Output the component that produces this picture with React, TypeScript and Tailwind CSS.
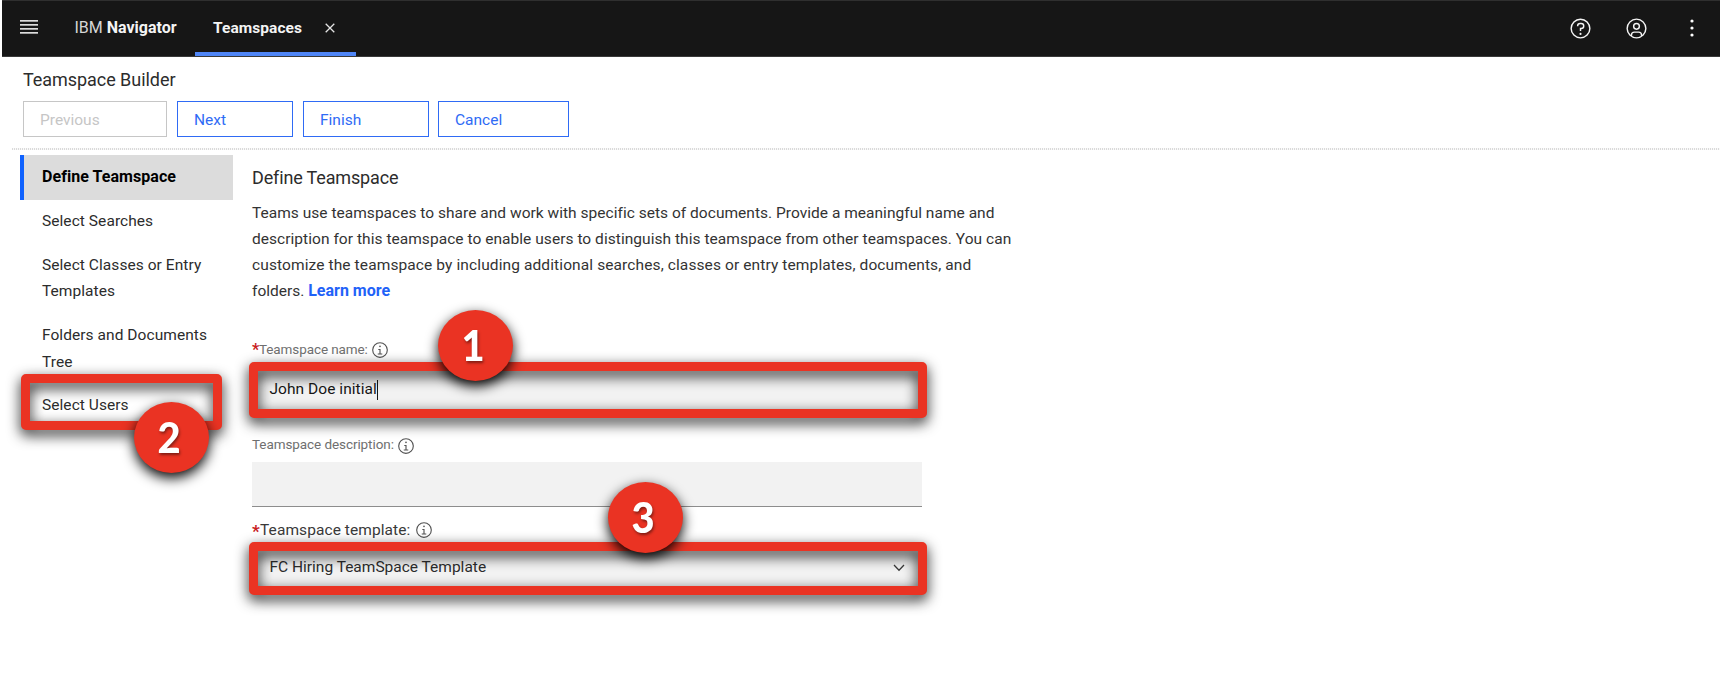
import React from "react";

const steps = [
  { lines: ["Define Teamspace"], active: true },
  { lines: ["Select Searches"] },
  { lines: ["Select Classes or Entry", "Templates"] },
  { lines: ["Folders and Documents", "Tree"] },
  { lines: ["Select Users"] },
];

function InfoIcon({ className = "" }: { className?: string }) {
  return (
    <svg viewBox="0 0 32 32" className={`h-[18px] w-[18px] shrink-0 fill-[#525252] ${className}`}>
      <path d="M17 22v-8h-4v2h2v6h-3v2h8v-2zM16 8a1.5 1.5 0 1 0 1.5 1.5A1.5 1.5 0 0 0 16 8z" />
      <path d="M16 30a14 14 0 1 1 14-14A14 14 0 0 1 16 30Zm0-26a12 12 0 1 0 12 12A12 12 0 0 0 16 4Z" />
    </svg>
  );
}

function WizardButton({ label, className }: { label: string; className: string }) {
  return (
    <button className={`flex h-9 items-center border pt-[2px] pl-4 text-[15.5px] leading-5 ${className}`}>
      {label}
    </button>
  );
}

function Highlight({ className }: { className: string }) {
  return (
    <div
      className={`pointer-events-none absolute rounded-[5px] border-[9px] border-[#ea3323] drop-shadow-[0_5px_7px_rgba(0,0,0,0.9)] ${className}`}
    />
  );
}

function Marker({ n, className }: { n: number; className: string }) {
  return (
    <div
      className={`absolute flex h-[71px] w-[75px] items-center justify-center rounded-[50%] bg-[#ea3323] pr-[5px] pb-[2px] font-['Lato'] text-[42px] leading-none font-black text-white shadow-[0_5px_13px_rgba(0,0,0,1)] [text-shadow:1px_2px_3px_rgba(0,0,0,0.45)] ${className}`}
    >
      <span className="scale-x-95">{n}</span>
    </div>
  );
}

function Header() {
  return (
    <header className="ml-[2px] flex h-[57px] justify-between border-t border-b border-t-[#2f2f2f] border-b-[#393939] bg-[#161616] text-[#f4f4f4]">
      <div className="flex">
        <svg viewBox="0 0 18 14" className="mt-[19px] ml-[18px] h-[14px] w-[18px] fill-[#dcdcdc]">
          <rect y="0" width="18" height="1.7" />
          <rect y="4" width="18" height="1.7" />
          <rect y="8" width="18" height="1.7" />
          <rect y="12" width="18" height="1.7" />
        </svg>
        <div className="ml-[36.500px] w-[120.500px] text-[16px] leading-[53px] whitespace-nowrap">
          <span className="text-[#d6d6d6]">IBM</span> <b>Navigator</b>
        </div>
        <div className="mt-px flex h-[54px] w-[161px] items-start border-b-4 border-[#4f86f7] pl-[18px]">
          <b className="w-[112px] text-[15.5px] leading-[52px] tracking-[0.07px]">Teamspaces</b>
          <svg viewBox="0 0 10 10" className="mt-[21px] h-[10px] w-[10px]">
            <path d="M0.7 0.7 9.3 9.3M9.3 0.7 0.7 9.3" stroke="#e4e4e4" strokeWidth="1.3" />
          </svg>
        </div>
      </div>
      <div className="flex pt-[15px] pr-[16px]">
        <svg viewBox="0 0 32 32" className="mt-px h-[23px] w-[23px] fill-[#f4f4f4]">
          <path d="M16 2a14 14 0 1 0 14 14A14 14 0 0 0 16 2Zm0 26a12 12 0 1 1 12-12A12 12 0 0 1 16 28Z" />
          <circle cx="16" cy="23.5" r="1.5" />
          <path d="M17 8H15.5A4.49 4.49 0 0 0 11 12.49V13h2v-.5A2.5 2.5 0 0 1 15.500 10H17a2.500 2.500 0 0 1 0 5H15v4.500h2V17a4.500 4.500 0 0 0 0-9Z" />
        </svg>
        <svg viewBox="0 0 32 32" className="mt-px ml-[33px] h-[23px] w-[23px] fill-[#f4f4f4]">
          <path d="M16 8a5 5 0 1 0 5 5A5 5 0 0 0 16 8Zm0 8a3 3 0 1 1 3-3A3 3 0 0 1 16 16Z" />
          <path d="M16 2A14 14 0 1 0 30 16 14.016 14.016 0 0 0 16 2ZM10 26.376V25a3.003 3.003 0 0 1 3-3h6a3.003 3.003 0 0 1 3 3v1.376a11.899 11.899 0 0 1-12 0Zm13.992-1.450A5.002 5.002 0 0 0 19 20H13a5.002 5.002 0 0 0-4.992 4.926 12 12 0 1 1 15.985 0Z" />
        </svg>
        <svg viewBox="0 0 24 24" className="ml-[32px] h-6 w-6 fill-white">
          <circle cx="12" cy="5" r="1.6" />
          <circle cx="12" cy="12" r="1.6" />
          <circle cx="12" cy="19" r="1.6" />
        </svg>
      </div>
    </header>
  );
}

export default function App() {
  return (
    <div className="relative h-[700px] w-[1720px] overflow-hidden bg-white font-['Roboto',sans-serif] text-[#2c2c2c]">
      <Header />
      <div className="pt-[9px] pl-[23px]">
        <h1 className="text-[18px] leading-7 tracking-[-0.05px]">Teamspace Builder</h1>
        <div className="mt-[7px] flex">
          <WizardButton label="Previous" className="w-[144px] border-[#c6c6c6] text-[#c6c6c6]" />
          <WizardButton label="Next" className="ml-[10px] w-[116px] border-[#2f6bf5] text-[#2f6bf5]" />
          <WizardButton label="Finish" className="ml-[10px] w-[126px] border-[#2f6bf5] text-[#2f6bf5]" />
          <WizardButton label="Cancel" className="ml-[9px] w-[131px] border-[#2f6bf5] text-[#2f6bf5]" />
        </div>
      </div>
      <div className="mt-[11px] ml-3 h-[2px] bg-[repeating-linear-gradient(90deg,#dadada_0_1px,#fafafa_1px_2px)]" />
      <div className="flex">
        <nav className="mt-[5px] ml-5 w-[213px] text-[15.5px] leading-[26.500px]">
          {steps.map((s) => (
            <div
              key={s.lines[0]}
              className={
                s.active
                  ? "border-l-4 border-[#0f62fe] bg-[#dcdcdc] pt-[8.6px] pb-[9.6px] pl-[18px] text-[16px] font-bold tracking-[0.05px] text-black"
                  : "py-[8.6px] pl-[22px] tracking-[0.06px]"
              }
            >
              {s.lines.map((l) => (
                <div key={l} className="whitespace-nowrap">
                  {l}
                </div>
              ))}
            </div>
          ))}
        </nav>
        <main className="mt-[14px] ml-[19px] w-[780px]">
          <h2 className="text-[18px] leading-7 tracking-[-0.15px]">Define Teamspace</h2>
          <div className="mt-[7.600px] text-[15.5px] leading-[26.300px] whitespace-nowrap text-[#333]">
            <p className="tracking-[0.025px]">
              Teams use teamspaces to share and work with specific sets of documents. Provide a meaningful name and
            </p>
            <p className="tracking-[0.045px]">
              description for this teamspace to enable users to distinguish this teamspace from other teamspaces. You can
            </p>
            <p className="tracking-[0.11px]">
              customize the teamspace by including additional searches, classes or entry templates, documents, and
            </p>
            <p>
              folders. <b className="text-[16px] text-[#1f62f8]">Learn more</b>
            </p>
          </div>
          <div className="mt-[34.200px] flex h-5 text-[13.500px] leading-5 text-[#6f6f6f]">
            <b className="w-[7px] pt-px text-[16px] text-[#c8201c]">*</b>
            <span className="tracking-[-0.1px]">Teamspace name:</span>
            <InfoIcon className="mt-[2px] ml-[3px]" />
          </div>
          <div className="mt-[8px] flex h-11 w-[670px] items-center bg-[#f2f2f2] pt-[2px] pl-[17.500px] text-[15.5px] tracking-[0.05px] text-[#161616]">
            John Doe initial
            <span className="h-5 w-px bg-[#161616]" />
          </div>
          <div className="mt-[23.500px] flex h-5 text-[13.500px] leading-5 text-[#6f6f6f]">
            <span className="tracking-[-0.08px]">Teamspace description:</span>
            <InfoIcon className="mt-[2.500px] ml-[3.500px]" />
          </div>
          <div className="mt-[8px] h-[44.500px] w-[670px] border-b border-[#8d8d8d] bg-[#f2f2f2]" />
          <div className="mt-[13.500px] flex h-5 text-[15.5px] leading-5 text-[#393939]">
            <b className="w-[8px] pt-px text-[17px] text-[#c8201c]">*</b>
            <span className="tracking-[0.08px]">Teamspace template:</span>
            <InfoIcon className="mt-px ml-[5px]" />
          </div>
          <div className="mt-[4px] flex h-[45px] w-[670px] items-center justify-between bg-[#f2f2f2] pt-[2px] pr-[17px] pl-[17.500px] text-[15.5px]">
            FC Hiring TeamSpace Template
            <svg viewBox="0 0 12 8" className="h-2 w-3 fill-none stroke-[#393939]">
              <path d="M1 1 6 6.200 11 1" strokeWidth="1.300" />
            </svg>
          </div>
        </main>
      </div>

      <Highlight className="top-[374px] left-[21px] h-[56px] w-[201px]" />
      <Highlight className="top-[362px] left-[249px] h-[56px] w-[678px]" />
      <Highlight className="top-[542px] left-[249px] h-[53px] w-[678px]" />
      <Marker n={1} className="top-[310px] left-[438px]" />
      <Marker n={2} className="top-[402px] left-[134px]" />
      <Marker n={3} className="top-[482px] left-[608px]" />
    </div>
  );
}
